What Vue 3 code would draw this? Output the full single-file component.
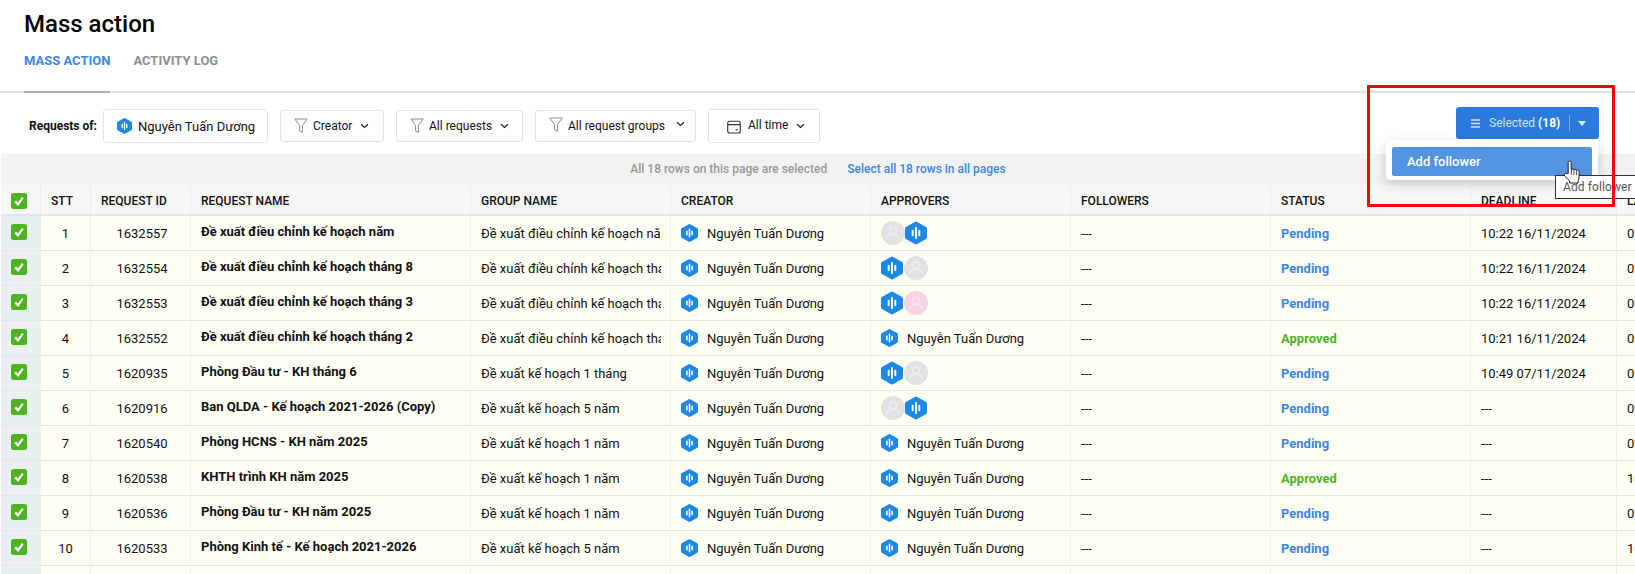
<script setup>
const columns = [
  { key: 'check', label: '' },
  { key: 'stt', label: 'STT' },
  { key: 'id', label: 'REQUEST ID' },
  { key: 'name', label: 'REQUEST NAME' },
  { key: 'group', label: 'GROUP NAME' },
  { key: 'creator', label: 'CREATOR' },
  { key: 'approvers', label: 'APPROVERS' },
  { key: 'followers', label: 'FOLLOWERS' },
  { key: 'status', label: 'STATUS' },
  { key: 'deadline', label: 'DEADLINE' },
  { key: 'last', label: 'LAST UPDATE' }
]
const p = 'Đề xuất kế hoạch'
const rows = [
  { id: 1632557, name: 'Đề xuất điều chỉnh kế hoạch năm', group: 'Đề xuất điều chỉnh kế hoạch năm', appr: ['gray', 'hex'], status: 'Pending', deadline: '10:22 16/11/2024', last: '09:12' },
  { id: 1632554, name: 'Đề xuất điều chỉnh kế hoạch tháng 8', group: 'Đề xuất điều chỉnh kế hoạch tháng 8', appr: ['hex', 'gray'], status: 'Pending', deadline: '10:22 16/11/2024', last: '09:12' },
  { id: 1632553, name: 'Đề xuất điều chỉnh kế hoạch tháng 3', group: 'Đề xuất điều chỉnh kế hoạch tháng 3', appr: ['hex', 'pink'], status: 'Pending', deadline: '10:22 16/11/2024', last: '09:12' },
  { id: 1632552, name: 'Đề xuất điều chỉnh kế hoạch tháng 2', group: 'Đề xuất điều chỉnh kế hoạch tháng 2', appr: null, status: 'Approved', deadline: '10:21 16/11/2024', last: '09:12' },
  { id: 1620935, name: 'Phòng Đầu tư - KH tháng 6', group: p + ' 1 tháng', appr: ['hex', 'gray'], status: 'Pending', deadline: '10:49 07/11/2024', last: '09:12' },
  { id: 1620916, name: 'Ban QLDA - Kế hoạch 2021-2026 (Copy)', group: p + ' 5 năm', appr: ['gray', 'hex'], status: 'Pending', deadline: '---', last: '09:12' },
  { id: 1620540, name: 'Phòng HCNS - KH năm 2025', group: p + ' 1 năm', appr: null, status: 'Pending', deadline: '---', last: '09:12' },
  { id: 1620538, name: 'KHTH trình KH năm 2025', group: p + ' 1 năm', appr: null, status: 'Approved', deadline: '---', last: '10:12' },
  { id: 1620536, name: 'Phòng Đầu tư - KH năm 2025', group: p + ' 1 năm', appr: null, status: 'Pending', deadline: '---', last: '09:12' },
  { id: 1620533, name: 'Phòng Kinh tế - Kế hoạch 2021-2026', group: p + ' 5 năm', appr: null, status: 'Pending', deadline: '---', last: '10:12' }
]
const filters = [
  { label: 'Creator', cls: 'f-creator' },
  { label: 'All requests', cls: 'f-requests' },
  { label: 'All request groups', cls: 'f-groups' }
]
const user = 'Nguyễn Tuấn Dương'
const hex = 'M12 3 20.500 7.800V16.200L12 21 3.500 16.200V7.800Z'
const bars = 'M12 7.500v9M9 10v4M15 10v4'
</script>

<template>
  <div class="page">
    <header class="head">
      <h1 class="title">Mass action</h1>
      <nav class="tabs">
        <span class="tab active">MASS ACTION</span>
        <span class="tab">ACTIVITY LOG</span>
      </nav>
    </header>

    <section class="toolbar">
      <span class="req-label">Requests of:</span>
      <div class="chip user-chip">
        <svg class="hex-c" viewBox="2 1.400 20 21.200"><path :d="hex" fill="#1e88e5" stroke="#1e88e5" stroke-width="3" stroke-linejoin="round" /><path :d="bars" stroke="#fff" stroke-width="1.800" stroke-linecap="round" /></svg>
        <span>{{ user }}</span>
      </div>
      <div v-for="f in filters" :key="f.label" class="chip filter" :class="f.cls">
        <svg class="funnel" viewBox="0 0 14 16"><path d="M.8 1h12.400L8.400 7.600v6.800L5.600 13V7.600Z" fill="none" stroke="#8c8c8c" stroke-width="1" stroke-linejoin="round" /></svg>
        <span class="f-text">{{ f.label }}</span>
        <svg class="chev" viewBox="0 0 10 6"><path d="M1.200 1 5 4.600 8.800 1" fill="none" stroke="#222" stroke-width="1.400" /></svg>
      </div>
      <div class="chip time">
        <svg class="cal" viewBox="0 0 14 14"><rect x=".7" y="1.200" width="12.600" height="11.800" rx="2" fill="none" stroke="#333" stroke-width="1.100" /><path d="M1 4.600h12M8.500 9.800h2.500" stroke="#333" stroke-width="1.100" /></svg>
        <span class="f-text">All time</span>
        <svg class="chev" viewBox="0 0 10 6"><path d="M1.200 1 5 4.600 8.800 1" fill="none" stroke="#222" stroke-width="1.400" /></svg>
      </div>

      <div class="selected-wrap">
        <button class="selected-btn">
          <svg class="menu-ico" viewBox="0 0 9 9"><path d="M0 1h9M0 4.500h9M0 8h9" stroke="#cfe2f9" stroke-width="1.300" /></svg>
          <span class="sel-text">Selected <b>(18)</b></span>
          <i class="sel-div"></i>
          <i class="caret"></i>
        </button>
        <div class="menu">
          <div class="menu-item">Add follower</div>
        </div>
      </div>
    </section>

    <div class="select-bar">
      <span class="sb-muted">All 18 rows on this page are selected</span>
      <span class="sb-link">Select all 18 rows in all pages</span>
    </div>

    <div class="table">
      <div class="row header">
        <div v-for="c in columns" :key="c.key" class="cell" :class="'c-' + c.key">
          <svg v-if="c.key === 'check'" class="check" viewBox="0 0 16 16"><rect width="16" height="16" rx="2.500" fill="#4fb31f" /><path d="M4.200 8.400 7 11.200l4.800-6.600" fill="none" stroke="#fff" stroke-width="2.200" /></svg>
          <template v-else>{{ c.label }}</template>
        </div>
      </div>
      <div v-for="(r, i) in rows" :key="r.id" class="row body">
        <div class="cell c-check">
          <svg class="check" viewBox="0 0 16 16"><rect width="16" height="16" rx="2.500" fill="#4fb31f" /><path d="M4.200 8.400 7 11.200l4.800-6.600" fill="none" stroke="#fff" stroke-width="2.200" /></svg>
        </div>
        <div class="cell c-stt">{{ i + 1 }}</div>
        <div class="cell c-id">{{ r.id }}</div>
        <div class="cell c-name"><b>{{ r.name }}</b></div>
        <div class="cell c-group"><span class="clip">{{ r.group }}</span></div>
        <div class="cell c-creator">
          <svg class="hex-s" viewBox="2 1.400 20 21.200"><path :d="hex" fill="#1e88e5" stroke="#1e88e5" stroke-width="3" stroke-linejoin="round" /><path :d="bars" stroke="#fff" stroke-width="1.800" stroke-linecap="round" /></svg>
          <span class="u-name">{{ user }}</span>
        </div>
        <div class="cell c-approvers">
          <template v-if="r.appr">
            <template v-for="a in r.appr" :key="a">
              <svg v-if="a === 'hex'" class="hex-b" viewBox="2 1.400 20 21.200"><path :d="hex" fill="#1e88e5" stroke="#1e88e5" stroke-width="3" stroke-linejoin="round" /><path :d="bars" stroke="#fff" stroke-width="1.800" stroke-linecap="round" /></svg>
              <svg v-else class="avatar" viewBox="0 0 24 24"><circle cx="12" cy="12" r="12" :fill="a === 'pink' ? '#f6d3e6' : '#e2e2e2'" /><circle cx="12" cy="9.500" r="3.400" fill="none" :stroke="a === 'pink' ? '#fbe6f1' : '#f0f0f0'" stroke-width="1.200" /><path d="M5.800 18c.6-3.400 3-4.600 6.200-4.600s5.600 1.200 6.200 4.600" fill="none" :stroke="a === 'pink' ? '#fbe6f1' : '#f0f0f0'" stroke-width="1.200" /></svg>
            </template>
          </template>
          <template v-else>
            <svg class="hex-s" viewBox="2 1.400 20 21.200"><path :d="hex" fill="#1e88e5" stroke="#1e88e5" stroke-width="3" stroke-linejoin="round" /><path :d="bars" stroke="#fff" stroke-width="1.800" stroke-linecap="round" /></svg>
            <span class="u-name">{{ user }}</span>
          </template>
        </div>
        <div class="cell c-followers">---</div>
        <div class="cell c-status" :class="r.status.toLowerCase()">{{ r.status }}</div>
        <div class="cell c-deadline">{{ r.deadline }}</div>
        <div class="cell c-last">{{ r.last }}</div>
      </div>
      <div class="row body tail">
        <div class="cell c-check"></div>
        <div class="cell c-stt"></div>
        <div class="cell c-id"></div>
        <div class="cell c-name"></div>
        <div class="cell c-group"></div>
        <div class="cell c-creator"></div>
        <div class="cell c-approvers"></div>
        <div class="cell c-followers"></div>
        <div class="cell c-status"></div>
        <div class="cell c-deadline"></div>
        <div class="cell c-last"></div>
      </div>
    </div>

    <div class="tooltip">Add follower</div>
    <svg class="hand" viewBox="0 0 19 24">
      <path d="M5.200 13.500V2.600a1.500 1.500 0 0 1 3 0v7.200l.6-.2a1.400 1.400 0 0 1 2.300.4 1.400 1.400 0 0 1 2.400.6 1.400 1.400 0 0 1 2.600.8v5.600c0 1.600-.4 2.600-1 3.600v2.400H6.600v-2.200L1.600 16a1.600 1.600 0 0 1 2.200-2.300Z" fill="#fff" stroke="#222" stroke-width="1" stroke-linejoin="round" />
      <path d="M8.300 10v5M11 10v5M13.600 10.800v4.200" stroke="#222" stroke-width=".8" />
    </svg>
    <div class="red-box"></div>
  </div>
</template>

<style>
html, body { margin: 0; background: #fff; overflow: hidden; }
</style>

<style scoped>
.page {
  position: relative;
  width: 1635px;
  height: 574px;
  overflow: hidden;
  background: #fff;
  font-family: Roboto, "Liberation Sans", sans-serif;
  font-size: 13px;
  color: #111;
}
.head { height: 91px; border-bottom: 2px solid #e3e3e3; padding-left: 24px; }
.title { margin: 0; padding-top: 10px; font-size: 24px; line-height: 28px; font-weight: 500; color: #000; }
.tabs { display: flex; gap: 23px; margin-top: 14px; }
.tab { font-size: 13px; font-weight: 700; line-height: 18px; height: 39px; color: #8f8f8f; white-space: nowrap; }
.tab.active { color: #3b87e6; border-bottom: 2px solid #b0b0b0; }

.toolbar { display: flex; align-items: flex-start; height: 61px; padding-left: 29px; }
.req-label { font-size: 12px; font-weight: 700; margin-top: 25px; line-height: 17px; width: 74px; white-space: nowrap; }
.chip {
  display: flex; align-items: center; box-sizing: border-box; height: 32px;
  margin-top: 17px; margin-left: 12px; border: 1px solid #e2e2e2; border-radius: 3px; background: #fff;
}
.user-chip { width: 165px; height: 34px; margin-top: 16px; margin-left: 0; border-color: #e2e5ea; padding-left: 13px; white-space: nowrap; }
.hex-c { width: 15px; height: 16px; margin-right: 6px; flex: none; }
.filter { padding-left: 13px; }
.f-creator { width: 104px; }
.f-requests { width: 127px; }
.f-groups { width: 161px; }
.time { width: 112px; height: 34px; margin-top: 16px; padding-left: 18px; }
.funnel { width: 14px; height: 16px; margin-right: 5px; flex: none; }
.cal { width: 14px; height: 14px; margin-right: 7px; margin-top: 1px; flex: none; }
.f-text { font-size: 12px; margin-right: 8px; margin-bottom: 1px; white-space: nowrap; }
.time .f-text { margin-bottom: 3px; }
.f-groups .f-text { margin-right: 11px; }
.f-groups .chev { margin-bottom: 4px; }
.f-groups .funnel { margin-bottom: 2px; }
.chev { width: 9px; height: 6px; flex: none; }

.selected-wrap { position: relative; margin-left: auto; margin-right: 36px; margin-top: 14px; }
.selected-btn {
  display: flex; align-items: center; width: 143px; height: 32px; box-sizing: border-box; padding: 0 0 0 15px;
  border: none; border-radius: 3px; background: #2a7bdd; color: #cfe2f9; font-family: inherit; font-size: 12px;
}
.menu-ico { width: 9px; height: 9px; margin-right: 9px; flex: none; }
.sel-text { white-space: nowrap; }
.sel-text b { color: #fff; font-weight: 700; }
.sel-div { width: 1px; height: 16px; background: #7fb0ea; margin-left: 9px; }
.caret { width: 0; height: 0; margin-left: 8px; border-left: 4.500px solid transparent; border-right: 4.500px solid transparent; border-top: 5px solid #e3eefb; }
.menu {
  position: absolute; top: 33px; right: 1px; width: 212px; height: 40px; box-sizing: border-box; padding: 7px 6px 4px;
  background: #fff; border-radius: 4px; box-shadow: 0 4px 12px rgba(0, 0, 0, .18); z-index: 2;
}
.menu-item { height: 29px; line-height: 29px; padding-left: 15px; border-radius: 2px; background: #5294e2; color: #fff; font-size: 13px; font-weight: 500; }

.select-bar { display: flex; justify-content: center; align-items: center; gap: 20px; height: 30px; margin-left: 1px; background: #f2f2f2; font-size: 12px; font-weight: 500; }
.sb-muted { color: #999; }
.sb-link { color: #3b87e6; }

.table { margin-left: 1px; }
.row { display: grid; grid-template-columns: 39px 50px 100px 280px 200px 200px 200px 200px 200px 146px 200px; }
.cell { display: flex; align-items: center; box-sizing: border-box; padding-left: 10px; border-left: 1px solid #f0f0ea; overflow: hidden; white-space: nowrap; }
.cell.c-check { border-left: none; }
.header { height: 32px; background: #f7f7f8; border-top: 1px solid #f2f2f2; box-sizing: border-box; border-bottom: 2px solid #e4e4e4; font-size: 12px; font-weight: 500; color: #111; }
.header .cell { border-left-color: #ececec; padding-top: 2px; }
.body { height: 35px; box-sizing: border-box; background: #fffff5; border-bottom: 1px solid #e6e6e6; }
.tail { height: 40px; }
.c-check { padding-left: 10px; }
.body .c-check { background: #e8f0f2; padding-bottom: 2px; }
.check { width: 16px; height: 16px; }
.body .c-stt, .body .c-id { justify-content: center; padding-left: 0; }
.body .c-id { padding-left: 3px; }
.c-name b { font-weight: 700; padding-bottom: 3px; color: #111; }
.c-group { padding-right: 9px; }
.clip { display: block; overflow: hidden; }
.hex-s { width: 17px; height: 18px; flex: none; }
.u-name { margin-left: 9px; }
.hex-b { width: 22px; height: 24px; flex: none; margin-right: 1px; }
.avatar { width: 24px; height: 24px; flex: none; }
.c-status.pending { color: #3b87e6; font-weight: 700; }
.c-status.approved { color: #4fb31f; font-weight: 700; }

.tooltip {
  position: absolute; left: 1555px; top: 175px; width: 90px; height: 24px; box-sizing: border-box;
  padding-left: 7px; line-height: 22px; border: 1px solid #333; background: #fff; color: #555;
  font-size: 12px; letter-spacing: .1px; z-index: 3;
}
.hand { position: absolute; left: 1563px; top: 160px; width: 19px; height: 24px; z-index: 5; }
.red-box {
  position: absolute; left: 1367px; top: 85px; width: 248px; height: 122px; box-sizing: border-box;
  border: 3px solid #f00; border-radius: 1px; z-index: 4; pointer-events: none;
}
</style>
